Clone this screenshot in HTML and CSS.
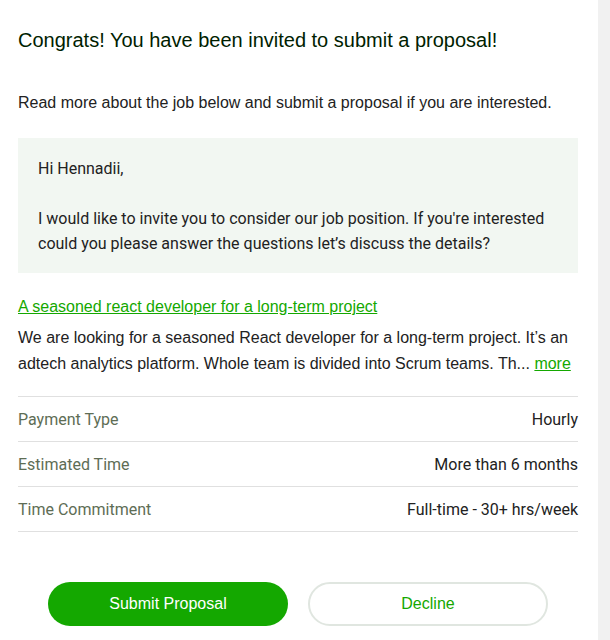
FILE: index.html
```html
<!DOCTYPE html>
<html>
<head>
<meta charset="utf-8">
<link rel="stylesheet" href="styles.css">
</head>
<body>
<div class="page">
  <main class="content">
    <h1 class="title">Congrats! You have been invited to submit a proposal!</h1>
    <p class="intro">Read more about the job below and submit a proposal if you are interested.</p>
    <div class="message">
      <p>Hi Hennadii,</p>
      <p>I would like to invite you to consider our job position. If you're interested could you please answer the questions let’s discuss the details?</p>
    </div>
    <a class="job-link" href="#">A seasoned react developer for a long-term project</a>
    <p class="desc"><span>We are looking for a seasoned React developer for a long-term project. It’s an adtech analytics platform. Whole team is divided into Scrum teams. Th...</span> <a class="more" href="#">more</a></p>
    <div class="details">
      <div class="row"><span class="label">Payment Type</span><span class="value">Hourly</span></div>
      <div class="row"><span class="label">Estimated Time</span><span class="value">More than 6 months</span></div>
      <div class="row"><span class="label">Time Commitment</span><span class="value">Full-time - 30+ hrs/week</span></div>
    </div>
    <div class="actions">
      <button class="btn btn-primary">Submit Proposal</button>
      <button class="btn btn-secondary">Decline</button>
    </div>
  </main>
  <div class="scrollbar"></div>
</div>
</body>
</html>
```
FILE: styles.css
```css
html, body {
  margin: 0;
  padding: 0;
  background: #fff;
}
.page {
  display: flex;
  width: 610px;
  height: 640px;
  overflow: hidden;
}
.content {
  width: 560px;
  padding: 0 20px 0 18px;
  font-family: "Liberation Sans", Arial, sans-serif;
  color: #222;
}
.scrollbar {
  width: 12px;
  flex: none;
  background: #f1f1f1;
}
.title {
  margin: 29px 0 0;
  font-size: 20px;
  line-height: 23px;
  font-weight: 400;
  color: #001e00;
}
.intro {
  margin: 39px 0 0;
  font-size: 16px;
  line-height: 24px;
}
.message {
  margin-top: 23px;
  background: #f2f7f2;
  padding: 18px 20px 17px;
  font-family: Roboto, sans-serif;
  font-size: 16px;
  line-height: 25px;
  color: #222;
}
.message p {
  margin: 0;
}
.message p + p {
  margin-top: 25px;
}
.job-link {
  display: inline-block;
  margin-top: 22px;
  font-size: 16px;
  line-height: 24px;
  color: #14a800;
  text-decoration: underline;
}
.desc {
  margin: 6px 0 0;
  font-size: 16px;
  line-height: 26px;
}
.more {
  color: #14a800;
  text-decoration: underline;
}
.details {
  margin-top: 19px;
  border-top: 1px solid #e0e0e0;
  font-family: Roboto, sans-serif;
  font-size: 16px;
}
.row {
  display: flex;
  justify-content: space-between;
  align-items: center;
  height: 44px;
  border-bottom: 1px solid #e0e0e0;
}
.label {
  color: #5e6d55;
}
.value {
  color: #222;
}
.actions {
  display: flex;
  justify-content: center;
  gap: 20px;
  margin-top: 50px;
}
.btn {
  width: 240px;
  height: 44px;
  border-radius: 22px;
  font-family: "Liberation Sans", Arial, sans-serif;
  font-size: 16px;
  cursor: pointer;
}
.btn-primary {
  background: #14a800;
  border: none;
  color: #fff;
}
.btn-secondary {
  background: #fff;
  border: 2px solid #e0e6e0;
  color: #14a800;
}
```
